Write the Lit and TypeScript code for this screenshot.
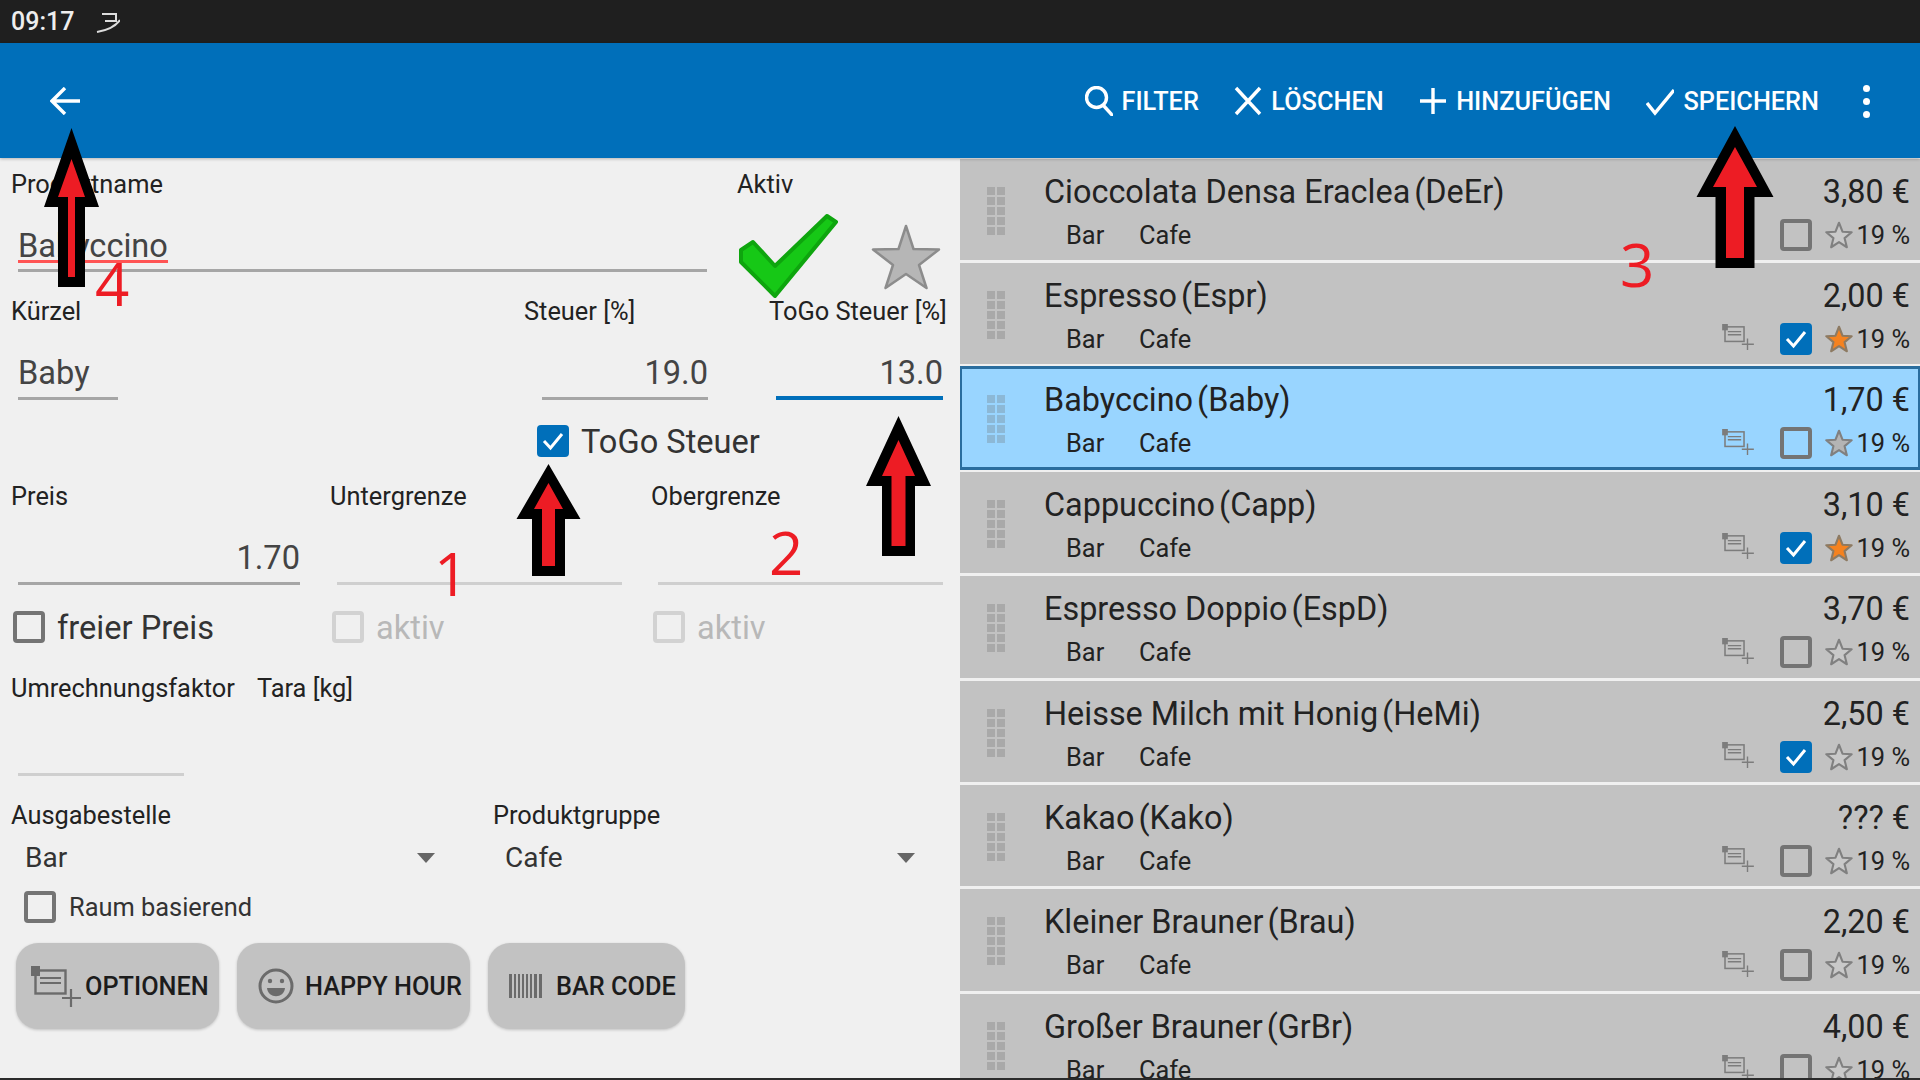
import {LitElement, html, css, svg} from 'lit';
import {customElement} from 'lit/decorators.js';

type Product = {
  name: string;
  code: string;
  price: string;
  checked?: boolean;
  star?: boolean;
  options?: boolean;
  selected?: boolean;
};

const PRODUCTS: Product[] = [
  {name: 'Cioccolata Densa Eraclea', code: 'DeEr', price: '3,80 €'},
  {name: 'Espresso', code: 'Espr', price: '2,00 €', checked: true, star: true, options: true},
  {name: 'Babyccino', code: 'Baby', price: '1,70 €', options: true, selected: true},
  {name: 'Cappuccino', code: 'Capp', price: '3,10 €', checked: true, star: true, options: true},
  {name: 'Espresso Doppio', code: 'EspD', price: '3,70 €', options: true},
  {name: 'Heisse Milch mit Honig', code: 'HeMi', price: '2,50 €', checked: true, options: true},
  {name: 'Kakao', code: 'Kako', price: '??? €', options: true},
  {name: 'Kleiner Brauner', code: 'Brau', price: '2,20 €', options: true},
  {name: 'Großer Brauner', code: 'GrBr', price: '4,00 €', options: true},
];

// black outer arrow, red inner arrow: tip x, tip y, head half width, head base y, shaft half width, bottom y
const ARROWS = [
  {o: [71.5, 128, 27.5, 207, 13.5, 287], i: [71.5, 159, 13.5, 197, 3.5, 277]},
  {o: [1735, 126, 38.5, 197, 19.5, 268], i: [1735, 147, 22, 187, 9, 258]},
  {o: [548.5, 464, 32, 519, 16.5, 576], i: [548.5, 483, 14.5, 509, 6.5, 566]},
  {o: [898.5, 416, 32.5, 486, 16.5, 556], i: [898.5, 440, 16.5, 476, 7, 546]},
];

const arrowPoints = ([x, y, hw, base, sw, bottom]: number[]) =>
  `${x},${y} ${x + hw},${base} ${x + sw},${base} ${x + sw},${bottom} ${x - sw},${bottom} ${x - sw},${base} ${x - hw},${base}`;

const STAR = 'M16 2 L20 12.2 L30.5 12.8 L22.4 19.6 L25 30 L16 24.2 L7 30 L9.6 19.6 L1.5 12.8 L12 12.2 Z';

const optionsIcon = (cls: string) => html`
  <svg class=${cls} viewBox="0 0 50 41" fill="none" stroke="currentColor">
    <rect x="4.5" y="4.5" width="30" height="23" stroke-width="2.4"></rect>
    <rect x="0" y="0" width="9" height="10" fill="currentColor" stroke="none"></rect>
    <path d="M9 12H30M9 17H30M31 32H50M40 23V41" stroke-width="2.2"></path>
  </svg>
`;

@customElement('app-root')
export class AppRoot extends LitElement {
  static styles = css`
    :host {
      display: block;
      position: relative;
      width: 1920px;
      height: 1080px;
      overflow: hidden;
      background: #f0f0f0;
      font-family: Roboto, 'Noto Sans', sans-serif;
      color: #222;
    }

    .status {
      height: 43px;
      background: #1f1f1f;
      color: #eee;
      display: flex;
      align-items: center;
      gap: 22px;
      padding-left: 11px;
      font-size: 25px;
      font-weight: 500;
      box-sizing: border-box;
    }

    .status svg {
      width: 24px;
      height: 24px;
    }

    .toolbar {
      height: 115px;
      background: #006fba;
      color: #fff;
      display: flex;
      align-items: center;
      box-sizing: border-box;
      padding: 0 0 0 50px;
      position: relative;
      z-index: 1;
      box-shadow: 0 1px 3px rgba(0, 0, 0, 0.25);
    }

    .toolbar svg {
      display: block;
      fill: none;
      stroke: #fff;
      stroke-width: 3.4;
    }

    .back {
      width: 30px;
      height: 28px;
    }

    .actions {
      margin-left: auto;
      display: flex;
      align-items: center;
      font-size: 25.3px;
      font-weight: 500;
      padding-top: 1px;
    }

    .action {
      display: flex;
      align-items: center;
      gap: 9px;
      margin-right: 35.5px;
    }

    .action svg {
      width: 28px;
      height: 30px;
      margin-top: -1px;
    }

    .more {
      display: flex;
      flex-direction: column;
      gap: 6px;
      margin-right: 50px;
      margin-left: 8.5px;
    }

    .more i {
      width: 7px;
      height: 7px;
      border-radius: 50%;
      background: #fff;
    }

    .body {
      display: flex;
      height: 920px;
    }

    .form {
      width: 960px;
      flex: none;
      box-sizing: border-box;
      padding: 12px 0 0 11px;
    }

    .label {
      font-size: 25.4px;
      line-height: 28px;
      margin-bottom: 2px;
      white-space: nowrap;
    }

    .input {
      font-size: 32.6px;
      line-height: 40px;
      color: #444;
      border-bottom: 3px solid #a6a6a6;
      box-sizing: border-box;
      margin-left: 7px;
      height: 73px;
      padding-top: 26px;
    }

    .input.right {
      text-align: right;
    }

    .input.idle {
      border-bottom-color: #cfcfcf;
    }

    .input.focus {
      border-bottom: 4px solid #006fba;
    }

    .name-row {
      display: grid;
      grid-template-columns: 726px 1fr;
      height: 127px;
    }

    .name-row .input {
      height: 72px;
      width: 689px;
    }

    .squiggle {
      display: inline-block;
      line-height: 28px;
      border-bottom: 3px solid #ff5454;
    }

    .aktiv-icons {
      display: flex;
      align-items: flex-start;
      position: relative;
    }

    .check-big {
      width: 100px;
      height: 84px;
      margin: 14px 0 0 1px;
      flex: none;
    }

    .star-big {
      width: 70px;
      height: 66px;
      margin: 24px 0 0 33px;
      flex: none;
    }

    .tax-row {
      display: grid;
      grid-template-columns: 513px 245px 1fr;
      height: 103px;
    }

    .togo {
      display: flex;
      align-items: center;
      gap: 12px;
      margin: 25px 0 0 526px;
      height: 32px;
      font-size: 32.6px;
      color: #333;
    }

    .togo span:last-child {
      padding-top: 2px;
    }

    .price-row {
      display: grid;
      grid-template-columns: 319px 321px 1fr;
      margin-top: 25px;
      height: 103px;
    }

    .check-row {
      display: grid;
      grid-template-columns: 319px 321px 1fr;
      margin-top: 25px;
      padding-left: 2px;
      height: 32px;
    }

    .check-row > div {
      display: flex;
      align-items: center;
      gap: 12px;
      font-size: 32.6px;
      line-height: 32px;
      color: #333;
    }

    .check-row > div span:last-child {
      padding-top: 2px;
    }

    .check-row > div.off {
      color: #b8b8b8;
    }

    .box {
      width: 32px;
      height: 32px;
      box-sizing: border-box;
      border: 4px solid #747474;
      border-radius: 4px;
      flex: none;
      display: block;
    }

    .box.off {
      border-color: #d2d2d2;
    }

    .box.on {
      border: none;
      background: #006fba;
      position: relative;
      padding: 0;
    }

    .box.on svg {
      position: absolute;
      inset: 0;
      width: 32px;
      height: 32px;
    }

    .conv {
      display: flex;
      margin-top: 32px;
      gap: 22px;
    }

    .conv .label {
      margin-bottom: 0;
    }

    .conv-line {
      width: 166px;
      height: 0;
      border-bottom: 3px solid #cfcfcf;
      margin: 71px 0 0 7px;
    }

    .select-row {
      display: grid;
      grid-template-columns: 482px 1fr;
      margin-top: 25px;
    }

    .select {
      display: flex;
      align-items: center;
      height: 52px;
      padding: 0 0 0 14px;
      font-size: 28px;
      color: #333;
      position: relative;
    }

    .select.second {
      padding-left: 12px;
    }

    .caret {
      width: 0;
      height: 0;
      border-left: 9px solid transparent;
      border-right: 9px solid transparent;
      border-top: 10px solid #666;
      position: absolute;
      top: 22px;
    }

    .select .caret {
      left: 406px;
    }

    .select.second .caret {
      left: 404px;
    }

    .room {
      display: flex;
      align-items: center;
      gap: 13px;
      margin: 8px 0 0 13px;
      height: 32px;
      font-size: 25.4px;
      color: #333;
    }

    .buttons {
      display: flex;
      margin: 20px 0 0 5px;
      gap: 18px;
    }

    .btn {
      height: 86px;
      background: #c2c2c2;
      border-radius: 22px;
      display: flex;
      align-items: center;
      box-sizing: border-box;
      font-size: 25.3px;
      font-weight: 500;
      color: #1c1c1c;
      box-shadow: 0 1px 3px rgba(0, 0, 0, 0.2);
      white-space: nowrap;
    }

    .btn.opt {
      width: 203px;
      padding-left: 15px;
    }

    .btn.opt svg {
      width: 50px;
      height: 41px;
      margin-right: 4px;
      color: #6b6b6b;
    }

    .btn.happy {
      width: 233px;
      padding-left: 21px;
      gap: 11px;
    }

    .btn.happy svg {
      width: 36px;
      height: 36px;
    }

    .btn.code {
      width: 197px;
      padding-left: 21px;
      gap: 14px;
    }

    .btn.code svg {
      width: 33px;
      height: 24px;
    }

    .list {
      flex: 1;
      overflow: hidden;
      display: flex;
      flex-direction: column;
      gap: 3px;
      padding-top: 0.6px;
    }

    .row {
      flex: none;
      height: 101.4px;
      background: #c2c2c2;
      display: grid;
      grid-template-columns: 84px 1fr;
      position: relative;
    }

    .row.selected {
      background: #99d5ff;
      outline: 3px solid #2a6d9e;
      outline-offset: -2px;
    }

    .grip {
      display: grid;
      grid-template-columns: 8px 8px;
      grid-auto-rows: 8px;
      gap: 2px;
      margin: 28px 0 0 27px;
      align-content: start;
    }

    .grip i {
      background: #a9a9a9;
    }

    .selected .grip i {
      background: #8cb8d6;
    }

    .info {
      padding: 13px 10px 0 0;
    }

    .line {
      display: flex;
      justify-content: space-between;
      font-size: 32.4px;
      line-height: 40px;
      color: #222;
    }

    .code-part {
      margin-left: 4px;
    }

    .line2 {
      display: flex;
      align-items: center;
      height: 40px;
      margin-top: 3px;
      font-size: 25.4px;
      color: #222;
    }

    .line2 .ausgabe {
      margin-left: 22px;
      width: 73px;
    }

    .line2 .tail {
      margin-left: auto;
      display: flex;
      align-items: center;
    }

    .line2 .opt-icon {
      width: 32px;
      height: 26px;
      color: #7c7c7c;
      margin-right: 26px;
      margin-bottom: 3px;
    }

    .line2 .star {
      width: 28px;
      height: 28px;
      margin: 0 4px 0 13px;
    }

    .overlay {
      position: absolute;
      inset: 0;
      width: 1920px;
      height: 1080px;
      z-index: 2;
      pointer-events: none;
    }

    .num {
      position: absolute;
      z-index: 3;
      color: #ed1c24;
      font-size: 60px;
      line-height: 60px;
      font-family: 'Open Sans', sans-serif;
      font-weight: 400;
    }

    .n1 {
      left: 434px;
      top: 543px;
    }

    .n2 {
      left: 769px;
      top: 522px;
    }

    .n3 {
      left: 1620px;
      top: 234px;
    }

    .n4 {
      left: 95px;
      top: 253px;
    }

    .bottom {
      position: absolute;
      left: 0;
      right: 0;
      bottom: 0;
      height: 2px;
      background: #2b2b2b;
      z-index: 3;
    }
  `;

  renderStar(p: Product) {
    const fill = p.star ? '#f5821f' : p.selected ? '#b4b4b4' : '#c9c9c9';
    const stroke = p.star ? '#8d7a62' : '#808080';
    return html`<svg class="star" viewBox="0 0 32 32">
      <path d=${STAR} fill=${fill} stroke=${stroke} stroke-width="2.4" stroke-linejoin="round"></path>
    </svg>`;
  }

  renderBox(state: string) {
    if (state === 'on') {
      return html`<b class="box on">
        <svg viewBox="0 0 32 32" fill="none" stroke="#fff" stroke-width="3"><path d="M7 16L13.5 23L25 9"></path></svg>
      </b>`;
    }
    return html`<b class="box ${state}"></b>`;
  }

  renderRow(p: Product) {
    return html`
      <div class="row ${p.selected ? 'selected' : ''}">
        <div class="grip">${Array.from({length: 10}, () => html`<i></i>`)}</div>
        <div class="info">
          <div class="line">
            <span>${p.name}<span class="code-part">(${p.code})</span></span>
            <span>${p.price}</span>
          </div>
          <div class="line2">
            <span class="ausgabe">Bar</span>
            <span>Cafe</span>
            <span class="tail">
              ${p.options ? optionsIcon('opt-icon') : ''}
              ${this.renderBox(p.checked ? 'on' : '')}
              ${this.renderStar(p)}
              <span>19 %</span>
            </span>
          </div>
        </div>
      </div>
    `;
  }

  render() {
    return html`
      <div class="status">
        <span>09:17</span>
        <svg viewBox="0 0 24 24" fill="none" stroke="#ddd" stroke-width="2">
          <path d="M6 4H20V11H9M24 10C19 17 12 20 1 22"></path>
        </svg>
      </div>
      <div class="toolbar">
        <svg class="back" viewBox="0 0 30 28"><path d="M30 14H2M15 1L2 14L15 27"></path></svg>
        <div class="actions">
          <div class="action">
            <svg viewBox="0 0 28 30"><circle cx="11.5" cy="11.5" r="10"></circle><path d="M18 19L28 30"></path></svg>
            FILTER
          </div>
          <div class="action">
            <svg viewBox="0 0 28 30"><path d="M2 2L26 28M26 2L2 28"></path></svg>
            LÖSCHEN
          </div>
          <div class="action">
            <svg viewBox="0 0 28 30"><path d="M14 2V28M1 15H27"></path></svg>
            HINZUFÜGEN
          </div>
          <div class="action">
            <svg viewBox="0 0 28 30"><path d="M1 17L9 27L28 4"></path></svg>
            SPEICHERN
          </div>
          <div class="more"><i></i><i></i><i></i></div>
        </div>
      </div>
      <div class="body">
        <div class="form">
          <div class="name-row">
            <div>
              <div class="label">Produktname</div>
              <div class="input"><span class="squiggle">Babyccino</span></div>
            </div>
            <div>
              <div class="label">Aktiv</div>
              <div class="aktiv-icons">
                <svg class="check-big" viewBox="0 0 100 84">
                  <polygon points="15,28 37,52 89,2 98,8 37,82 3,48 3,36" fill="#16c816" stroke="#0ea50e" stroke-width="4" stroke-linejoin="round"></polygon>
                </svg>
                <svg class="star-big" viewBox="0 0 70 66">
                  <path d="M35 2L42.5 25L68 25.5L48 41L55.5 64L35 50L14.5 64L22 41L2 25.5L27.5 25Z" fill="#b6b6b6" stroke="#8c8c8c" stroke-width="2.5" stroke-linejoin="round"></path>
                </svg>
              </div>
            </div>
          </div>

          <div class="tax-row">
            <div>
              <div class="label">Kürzel</div>
              <div class="input" style="width:100px">Baby</div>
            </div>
            <div>
              <div class="label">Steuer [%]</div>
              <div class="input right" style="width:166px;margin-left:18px">19.0</div>
            </div>
            <div>
              <div class="label">ToGo Steuer [%]</div>
              <div class="input right focus" style="width:167px">13.0</div>
            </div>
          </div>

          <div class="togo">${this.renderBox('on')}<span>ToGo Steuer</span></div>

          <div class="price-row">
            <div>
              <div class="label">Preis</div>
              <div class="input right" style="width:282px">1.70</div>
            </div>
            <div>
              <div class="label">Untergrenze</div>
              <div class="input idle" style="width:285px"></div>
            </div>
            <div>
              <div class="label">Obergrenze</div>
              <div class="input idle" style="width:285px"></div>
            </div>
          </div>

          <div class="check-row">
            <div>${this.renderBox('')}<span>freier Preis</span></div>
            <div class="off">${this.renderBox('off')}<span>aktiv</span></div>
            <div class="off">${this.renderBox('off')}<span>aktiv</span></div>
          </div>

          <div class="conv">
            <div class="label">Umrechnungsfaktor</div>
            <div class="label">Tara [kg]</div>
          </div>
          <div class="conv-line"></div>

          <div class="select-row">
            <div>
              <div class="label">Ausgabestelle</div>
              <div class="select">Bar<span class="caret"></span></div>
            </div>
            <div>
              <div class="label">Produktgruppe</div>
              <div class="select second">Cafe<span class="caret"></span></div>
            </div>
          </div>

          <div class="room">${this.renderBox('')}<span>Raum basierend</span></div>

          <div class="buttons">
            <div class="btn opt">${optionsIcon('')}OPTIONEN</div>
            <div class="btn happy">
              <svg viewBox="0 0 36 36" fill="none" stroke="#6b6b6b" stroke-width="3">
                <circle cx="18" cy="18" r="16"></circle>
                <circle cx="12" cy="13" r="2.2" fill="#6b6b6b" stroke="none"></circle>
                <circle cx="24" cy="13" r="2.2" fill="#6b6b6b" stroke="none"></circle>
                <path d="M9 20H27C26 31 10 31 9 20Z" fill="#6b6b6b" stroke="none"></path>
              </svg>
              HAPPY HOUR
            </div>
            <div class="btn code">
              <svg viewBox="0 0 33 24" fill="#6b6b6b">
                <rect x="0" width="3" height="24"></rect>
                <rect x="5" width="2" height="24"></rect>
                <rect x="9" width="2" height="24"></rect>
                <rect x="13" width="2" height="24"></rect>
                <rect x="17" width="2" height="24"></rect>
                <rect x="21" width="2" height="24"></rect>
                <rect x="25" width="3" height="24"></rect>
                <rect x="30" width="3" height="24"></rect>
              </svg>
              BAR CODE
            </div>
          </div>
        </div>

        <div class="list">${PRODUCTS.map((p) => this.renderRow(p))}</div>
      </div>

      <svg class="overlay" viewBox="0 0 1920 1080">
        ${ARROWS.map(
          (a) => svg`
            <polygon points=${arrowPoints(a.o)} fill="#000"></polygon>
            <polygon points=${arrowPoints(a.i)} fill="#ed1c24"></polygon>
          `
        )}
      </svg>
      <span class="num n1">1</span>
      <span class="num n2">2</span>
      <span class="num n3">3</span>
      <span class="num n4">4</span>
      <div class="bottom"></div>
    `;
  }
}
